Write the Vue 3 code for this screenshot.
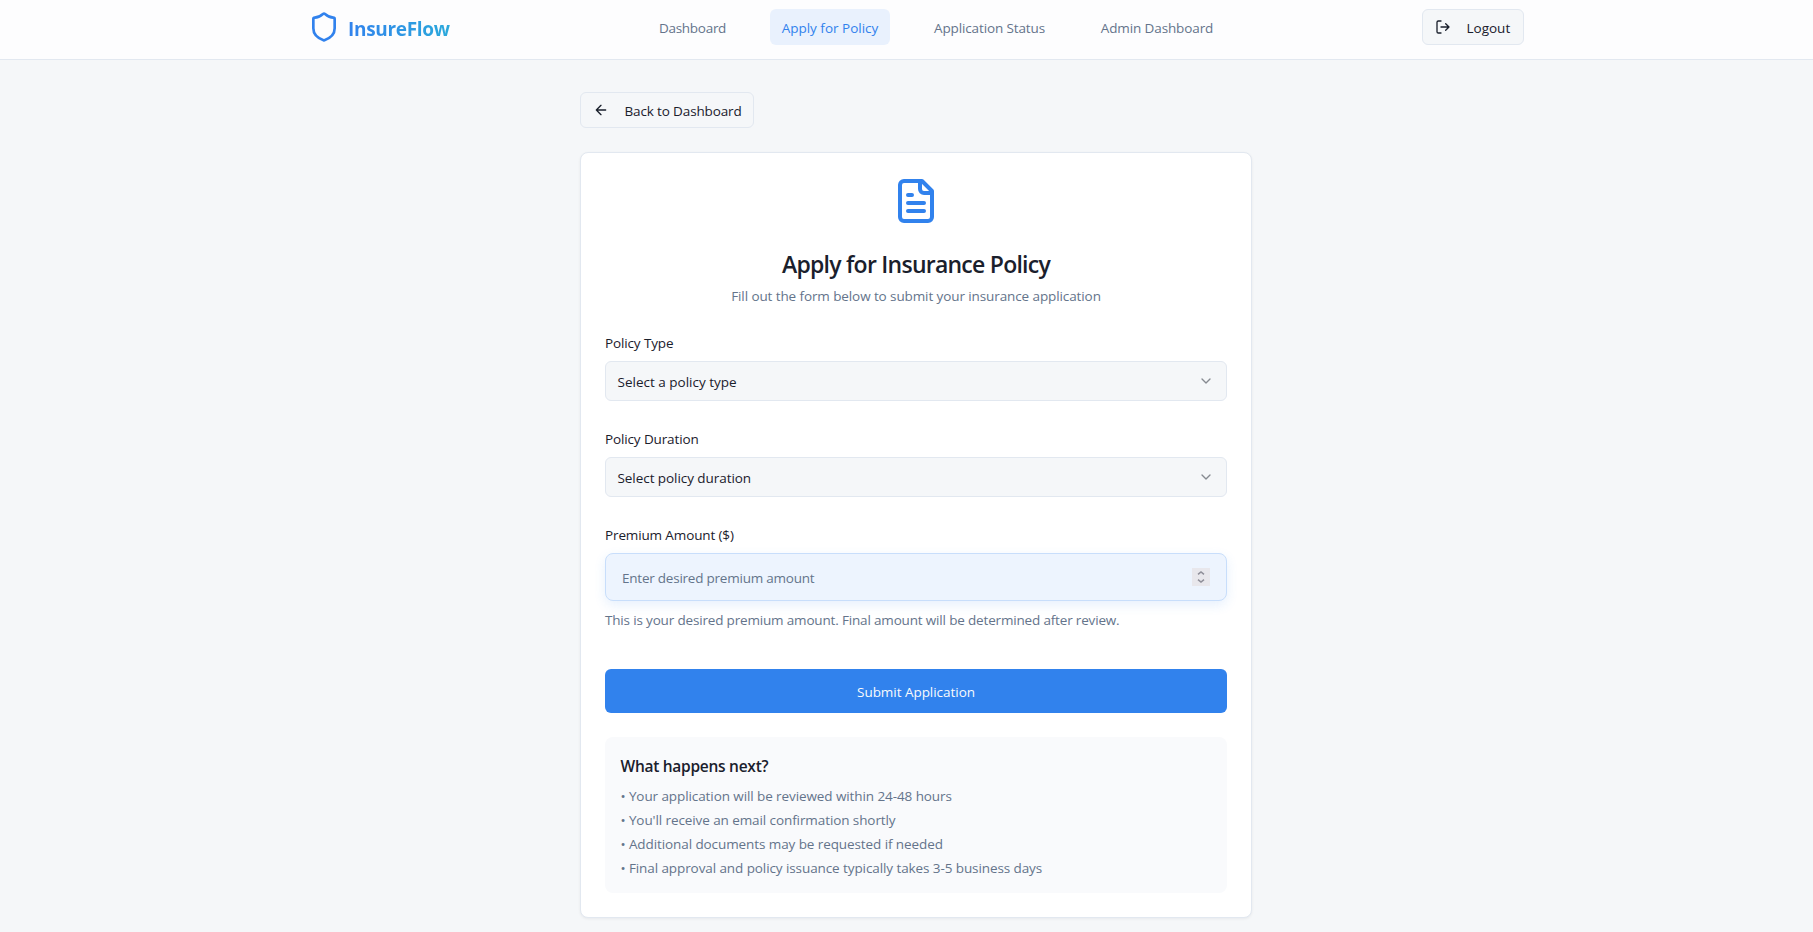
<script setup>
import { ref } from 'vue'

const nav = [
  { label: 'Dashboard', tone: 'tight' },
  { label: 'Apply for Policy', tone: 'even', active: true },
  { label: 'Application Status', tone: '' },
  { label: 'Admin Dashboard', tone: '' },
]
const selects = [
  { label: 'Policy Type', placeholder: 'Select a policy type', tone: 'even' },
  { label: 'Policy Duration', placeholder: 'Select policy duration', tone: '' },
]
const steps = [
  'Your application will be reviewed within 24-48 hours',
  "You'll receive an email confirmation shortly",
  'Additional documents may be requested if needed',
  'Final approval and policy issuance typically takes 3-5 business days',
]
const amount = ref('')
</script>

<template>
  <div class="page">
    <header class="header">
      <div class="header-inner">
        <div class="brand">
          <svg class="icon brand-icon" viewBox="0 0 24 24"><path d="M20 13c0 5-3.5 7.5-7.66 8.95a1 1 0 0 1-.67-.01C7.5 20.5 4 18 4 13V6a1 1 0 0 1 1-1c2 0 4.5-1.2 6.24-2.72a1.17 1.17 0 0 1 1.52 0C14.51 3.81 17 5 19 5a1 1 0 0 1 1 1z" /></svg>
          <span class="brand-name">InsureFlow</span>
        </div>
        <nav class="nav">
          <a v-for="item in nav" :key="item.label" class="nav-link" :class="[item.tone, { active: item.active }]">{{ item.label }}</a>
        </nav>
        <button class="button logout">
          <svg class="icon small" viewBox="0 0 24 24"><path d="M9 21H5a2 2 0 0 1-2-2V5a2 2 0 0 1 2-2h4M16 17l5-5-5-5M21 12H9" /></svg>
          <span class="even">Logout</span>
        </button>
      </div>
    </header>

    <main class="main">
      <button class="button back">
        <svg class="icon small" viewBox="0 0 24 24"><path d="m12 19-7-7 7-7M19 12H5" /></svg>
        <span>Back to Dashboard</span>
      </button>

      <section class="card">
        <div class="intro">
          <svg class="icon doc" viewBox="0 0 24 24"><path d="M15 2H6a2 2 0 0 0-2 2v16a2 2 0 0 0 2 2h12a2 2 0 0 0 2-2V7Z" /><path d="M14 2v4a2 2 0 0 0 2 2h4M10 9H8M16 13H8M16 17H8" /></svg>
          <h1 class="title">Apply for Insurance Policy</h1>
          <p class="subtitle">Fill out the form below to submit your insurance application</p>
        </div>

        <form class="form" @submit.prevent>
          <div v-for="field in selects" :key="field.label" class="field">
            <label class="label">{{ field.label }}</label>
            <button type="button" class="select">
              <span :class="field.tone">{{ field.placeholder }}</span>
              <svg class="icon small chevron" viewBox="0 0 24 24"><path d="m6 9 6 6 6-6" /></svg>
            </button>
          </div>

          <div class="field">
            <label class="label" for="amount">Premium Amount ($)</label>
            <div class="amount">
              <input id="amount" v-model="amount" class="amount-input" placeholder="Enter desired premium amount" />
              <span class="spinner">
                <svg class="spinner-icon" viewBox="0 0 18 18"><path d="M6 6.4 9 3.9l3 2.5M6 11.6l3 2.5 3-2.5" /></svg>
              </span>
            </div>
          </div>
          <p class="help">This is your desired premium amount. Final amount will be determined after review.</p>

          <button class="submit">Submit Application</button>
        </form>

        <div class="next">
          <h2 class="next-title">What happens next?</h2>
          <ul class="steps">
            <li v-for="step in steps" :key="step">• {{ step }}</li>
          </ul>
        </div>
      </section>
    </main>
  </div>
</template>

<style>
body {
  background: #f5f7f9;
}
</style>

<style scoped>
.page {
  box-sizing: border-box;
  height: 932px;
  padding-left: 19px;
  overflow: hidden;
  background: #f5f7f9;
  color: #1a202c;
  font: 13.5px/20px "Open Sans", "Noto Sans", sans-serif;
}
.page * {
  box-sizing: border-box;
}
h1, h2, p, ul {
  margin: 0;
  padding: 0;
}
button, input {
  font: inherit;
  color: inherit;
}
.icon {
  display: block;
  flex: none;
  fill: none;
  stroke: currentColor;
  stroke-width: 2;
  stroke-linecap: round;
  stroke-linejoin: round;
}
.small {
  width: 16px;
  height: 16px;
}
.header {
  height: 60px;
  margin-left: -19px;
  padding-left: 19px;
  background: #fdfdfe;
  border-bottom: 1px solid #e2e8f0;
}
.header-inner {
  display: grid;
  grid-template-columns: 339px 578px 1fr;
  width: 1216px;
  height: 54px;
  margin: 0 auto;
  align-items: center;
}
.brand {
  display: flex;
  align-items: center;
  gap: 8px;
}
.brand-icon {
  width: 32px;
  height: 32px;
  color: #3182ed;
}
.brand-name {
  padding-top: 4px;
  font-size: 19px;
  line-height: 28px;
  font-weight: 700;
  letter-spacing: -0.32px;
  background: linear-gradient(90deg, #3182ed, #2ba9db);
  -webkit-background-clip: text;
  background-clip: text;
  color: transparent;
}
.nav {
  display: grid;
  grid-template-columns: 91px 120px 135px 136px;
  gap: 32px;
}
.nav-link {
  height: 36px;
  padding-top: 9px;
  border-radius: 6px;
  color: #64748b;
  text-align: center;
  white-space: nowrap;
  letter-spacing: -0.12px;
}
.nav-link.active {
  background: #e9f1fd;
  color: #3182ed;
}
.nav-link.even, .even {
  letter-spacing: 0;
}
.nav-link.tight {
  letter-spacing: -0.27px;
}
.button {
  display: flex;
  align-items: center;
  height: 36px;
  padding: 0 12px;
  gap: 15.5px;
  border: 1px solid #e2e8f0;
  border-radius: 6px;
  background: #f5f7f9;
  white-space: nowrap;
}
.button span, .select span {
  padding-top: 2px;
}
.logout {
  width: 102px;
  justify-self: end;
}
.main {
  width: 672px;
  margin: 0 auto;
  padding-top: 32px;
}
.back {
  width: 174px;
  letter-spacing: -0.14px;
}
.card {
  margin-top: 24px;
  padding: 24px;
  height: 766px;
  border: 1px solid #e2e8f0;
  border-radius: 8px;
  background: #fff;
  box-shadow: 0 1px 3px rgba(15, 23, 42, 0.06);
}
.intro {
  display: flex;
  flex-direction: column;
  align-items: center;
}
.doc {
  width: 48px;
  height: 48px;
  color: #3182ed;
}
.title {
  margin-top: 23px;
  font-size: 23px;
  line-height: 32px;
  font-weight: 600;
  letter-spacing: -0.75px;
}
.subtitle {
  margin-top: 6px;
  color: #64748b;
  letter-spacing: -0.1px;
}
.form {
  margin-top: 27px;
}
.field + .field {
  margin-top: 28px;
}
.label {
  display: block;
  margin-bottom: 8px;
  letter-spacing: -0.13px;
}
.select {
  display: flex;
  align-items: center;
  justify-content: space-between;
  width: 100%;
  height: 40px;
  padding: 0 12px 0 11.5px;
  border: 1px solid #e2e8f0;
  border-radius: 6px;
  background: #f5f7f9;
  letter-spacing: -0.06px;
}
.chevron {
  opacity: 0.5;
}
.amount {
  display: flex;
  align-items: center;
  height: 48px;
  padding: 0 16px;
  border: 1px solid #c8defb;
  border-radius: 8px;
  background: #edf4fe;
  box-shadow: 0 4px 12px rgba(49, 130, 237, 0.12);
}
.amount-input {
  flex: 1;
  height: 22px;
  padding: 2px 0 0;
  border: 0;
  outline: 0;
  background: none;
  letter-spacing: -0.23px;
}
.amount-input::placeholder {
  color: #64748b;
  opacity: 1;
}
.spinner {
  width: 18px;
  height: 18px;
  background: #e8e7ec;
}
.spinner-icon {
  display: block;
  width: 18px;
  height: 18px;
  fill: none;
  stroke: #8f8f99;
  stroke-width: 1.5;
}
.help {
  margin-top: 9px;
  color: #64748b;
  letter-spacing: -0.17px;
}
.submit {
  display: block;
  width: 100%;
  height: 44px;
  margin-top: 39px;
  padding: 2px 0 0;
  border: 0;
  border-radius: 6px;
  background: #3182ed;
  color: #f8fafc;
  letter-spacing: -0.04px;
}
.next {
  height: 156px;
  margin-top: 24px;
  padding: 17px 16px 0 15.5px;
  border-radius: 8px;
  background: #f9fafc;
}
.next-title {
  font-size: 15.5px;
  line-height: 24px;
  font-weight: 600;
  letter-spacing: -0.27px;
}
.steps {
  margin-top: 6px;
  list-style: none;
  color: #64748b;
  line-height: 24px;
  letter-spacing: -0.09px;
}
</style>
